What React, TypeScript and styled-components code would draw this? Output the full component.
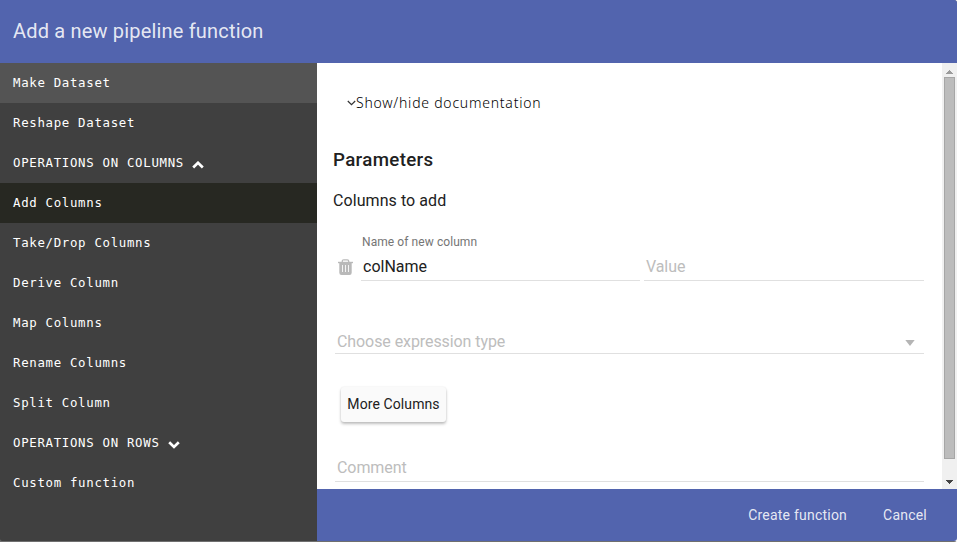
import React from 'react';
import styled, { createGlobalStyle } from 'styled-components';

const Global = createGlobalStyle`
  * { box-sizing: border-box; }
  body { margin: 0; background: #fff; overflow: hidden; }
`;

const Dialog = styled.div`
  width: 957px;
  height: 542px;
  display: grid;
  grid-template-rows: 63px 478px;
  font-family: Roboto, sans-serif;
  color: #212121;
  background: #6f6f6f;
  border-radius: 0 3px 3px 0;
`;

const Header = styled.header`
  display: flex;
  align-items: center;
  padding: 0 13px 1px;
  background: #5264ae;
  color: rgba(255, 255, 255, 0.87);
  font-size: 20px;
  letter-spacing: 0.18px;
  border-top-right-radius: 3px;
`;

const Columns = styled.div`
  display: grid;
  grid-template-columns: 317px 640px;
  min-height: 0;
`;

const Sidebar = styled.nav`
  background: #404040;
  border-bottom-left-radius: 2px;
`;

const NavItem = styled.div<{ $tone?: string }>`
  height: 40px;
  padding: 0 13px 1px;
  display: flex;
  align-items: center;
  gap: 8px;
  background: ${p => p.$tone || 'transparent'};
  color: #fff;
  font-family: 'DejaVu Sans Mono', monospace;
  font-size: 12.4px;
  letter-spacing: 0.68px;
  line-height: 24px;
  white-space: pre;
  svg { margin-top: 4px; }
`;

const Main = styled.main`
  display: grid;
  grid-template-rows: 426px 52px;
  background: #fff;
`;

const ScrollArea = styled.section`
  display: flex;
  min-height: 0;
`;

const Content = styled.div`
  flex: 1;
  height: 426px;
  padding: 29px 18px 0 16px;
  overflow: hidden;
`;

const DocToggle = styled.div`
  display: flex;
  align-items: center;
  height: 20px;
  padding-left: 14px;
  font-family: 'Noto Sans', sans-serif;
  font-weight: 300;
  font-size: 14px;
  letter-spacing: 0.77px;
  color: #000;
  svg { margin-top: 2px; }
`;

const Heading = styled.h3`
  margin: 35px 0 0;
  font-size: 18.7px;
  line-height: 26px;
  font-weight: 500;
  letter-spacing: 0.35px;
`;

const SubHeading = styled.div`
  margin-top: 16px;
  font-size: 16px;
  line-height: 24px;
  letter-spacing: 0.07px;
`;

const FieldRow = styled.div`
  display: flex;
  align-items: flex-end;
  height: 68px;
  padding-left: 5px;
`;

const TrashSlot = styled.span`
  width: 23px;
  height: 22px;
`;

const Field = styled.div<{ $w: number; $gap?: number }>`
  width: ${p => p.$w}px;
  margin-right: ${p => p.$gap || 0}px;
  border-bottom: 1px solid #e0e0e0;
  padding-left: 2px;
  font-size: 16px;
  line-height: 27px;
`;

const FieldLabel = styled.div`
  margin-left: -1px;
  font-size: 12px;
  line-height: 16px;
  letter-spacing: 0.08px;
  color: #757575;
  margin-bottom: 3px;
`;

const Placeholder = styled.span`
  color: #bdbdbd;
  letter-spacing: -0.08px;
`;

const WideField = styled.div<{ $top: number }>`
  display: flex;
  justify-content: space-between;
  align-items: center;
  width: 589px;
  height: 25px;
  margin: ${p => p.$top}px 0 0 2px;
  padding: 0 9px 0 2px;
  border-bottom: 1px solid #e0e0e0;
  font-size: 16px;
  svg { margin-top: 4px; }
`;

const CommentField = styled(WideField)`
  padding-bottom: 4px;
`;

const MoreButton = styled.button`
  display: block;
  width: 105px;
  height: 35px;
  margin: 33px 0 0 8px;
  padding: 0 0 2px;
  border: 0;
  border-radius: 3px;
  background: #fafafa;
  box-shadow: 0 2px 3px rgba(0, 0, 0, 0.25), 0 0 2px rgba(0, 0, 0, 0.08);
  color: #212121;
  font: 400 14px Roboto, sans-serif;
  letter-spacing: 0.1px;
`;

const ScrollTrack = styled.div`
  width: 15px;
  display: grid;
  grid-template-rows: 14px 382px 30px;
  background: #f0f0f0;
`;

const Thumb = styled.div`
  margin: 0 2px;
  background: #bcbcbc;
  border: 1px solid #a6a6a6;
`;

const ArrowSlot = styled.div<{ $pad: string }>`
  padding: ${p => p.$pad};
  line-height: 0;
`;

const Footer = styled.footer`
  display: flex;
  justify-content: flex-end;
  align-items: center;
  gap: 36px;
  padding-right: 30px;
  background: #5264ae;
  border-bottom-right-radius: 3px;
`;

const Action = styled.button`
  padding: 0;
  border: 0;
  background: none;
  color: rgba(255, 255, 255, 0.87);
  font: 400 14px Roboto, sans-serif;
  letter-spacing: 0.22px;
`;

const NavChevron = ({ up }: { up?: boolean }) => (
  <svg width="12" height="8" viewBox="0 0 12 8" fill="none" stroke="#fff" strokeWidth="2.7">
    <path d={up ? 'M1.2 6.5 L6 1.8 L10.8 6.5' : 'M1.2 1.2 L6 5.9 L10.8 1.2'} />
  </svg>
);

const items: { label: string; tone?: string; chevron?: 'up' | 'down' }[] = [
  { label: 'Make Dataset', tone: '#545454' },
  { label: 'Reshape Dataset' },
  { label: 'OPERATIONS ON COLUMNS', chevron: 'up' },
  { label: 'Add Columns', tone: '#272822' },
  { label: 'Take/Drop Columns' },
  { label: 'Derive Column' },
  { label: 'Map Columns' },
  { label: 'Rename Columns' },
  { label: 'Split Column' },
  { label: 'OPERATIONS ON ROWS', chevron: 'down' },
  { label: 'Custom function' },
];

export default function App() {
  return (
    <>
      <Global />
      <Dialog>
        <Header>Add a new pipeline function</Header>
        <Columns>
          <Sidebar>
            {items.map(i => (
              <NavItem key={i.label} $tone={i.tone}>
                <span>{i.label}</span>
                {i.chevron && <NavChevron up={i.chevron === 'up'} />}
              </NavItem>
            ))}
          </Sidebar>
          <Main>
            <ScrollArea>
              <Content>
                <DocToggle>
                  <svg width="9" height="6" viewBox="0 0 9 6" fill="none" stroke="#333" strokeWidth="1.2">
                    <path d="M.8 1 L4.5 4.6 L8.2 1" />
                  </svg>
                  <span>Show/hide documentation</span>
                </DocToggle>
                <Heading>Parameters</Heading>
                <SubHeading>Columns to add</SubHeading>
                <FieldRow>
                  <TrashSlot>
                    <svg width="15" height="16" viewBox="0 0 15 16" fill="none" stroke="#b9b9b9">
                      <path d="M0 3.5 H15" strokeWidth="1.4" />
                      <path d="M4.3 3.3 V2.2 Q4.3 .8 5.7 .8 H9.3 Q10.7 .8 10.7 2.2 V3.3" strokeWidth="1.3" />
                      <path d="M2.2 4 V13.7 Q2.2 15 3.5 15 H11.5 Q12.8 15 12.8 13.7 V4" strokeWidth="1.8" fill="#b9b9b9" />
                      <path d="M4.5 6 V13 M7.5 6 V13 M10.5 6 V13" strokeWidth="1" stroke="#f4f4f4" />
                    </svg>
                  </TrashSlot>
                  <Field $w={279} $gap={4}>
                    <FieldLabel>Name of new column</FieldLabel>
                    colName
                  </Field>
                  <Field $w={280}>
                    <Placeholder>Value</Placeholder>
                  </Field>
                </FieldRow>
                <WideField $top={48}>
                  <Placeholder>Choose expression type</Placeholder>
                  <svg width="10" height="6" viewBox="0 0 10 6">
                    <path d="M.3 0 H9.7 L5 6 Z" fill="#b5b5b5" />
                  </svg>
                </WideField>
                <MoreButton>More Columns</MoreButton>
                <CommentField $top={35}>
                  <Placeholder>Comment</Placeholder>
                </CommentField>
              </Content>
              <ScrollTrack>
                <ArrowSlot $pad="6px 4px">
                  <svg width="7" height="4" viewBox="0 0 7 4" shapeRendering="crispEdges">
                    <path d="M0 4 L3.5 0 L7 4 Z" fill="#9b9b9b" />
                  </svg>
                </ArrowSlot>
                <Thumb />
                <ArrowSlot $pad="20px 4px 0">
                  <svg width="7" height="4" viewBox="0 0 7 4" shapeRendering="crispEdges">
                    <path d="M0 0 L3.5 4 L7 0 Z" fill="#444" />
                  </svg>
                </ArrowSlot>
              </ScrollTrack>
            </ScrollArea>
            <Footer>
              <Action>Create function</Action>
              <Action>Cancel</Action>
            </Footer>
          </Main>
        </Columns>
      </Dialog>
    </>
  );
}
